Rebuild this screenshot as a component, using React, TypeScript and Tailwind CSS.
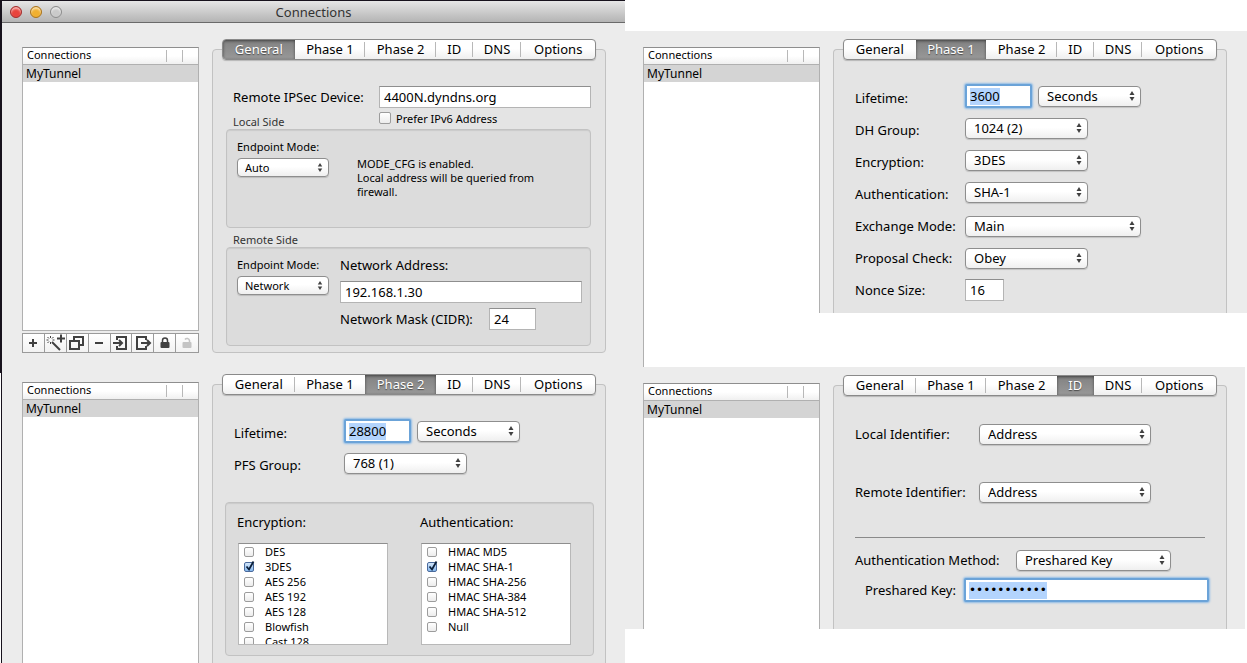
import React, { useId, useState } from "react";
import clsx from "clsx";

const TABS = ["General", "Phase 1", "Phase 2", "ID", "DNS", "Options"];

const ENCRYPTION = ["DES", "3DES", "AES 256", "AES 192", "AES 128", "Blowfish", "Cast 128"];
const AUTHENTICATION = ["HMAC MD5", "HMAC SHA-1", "HMAC SHA-256", "HMAC SHA-384", "HMAC SHA-512", "Null"];

const TOOLS: { label: string; disabled?: boolean; icon: React.ReactNode }[] = [
  { label: "Add", icon: <path d="M7 10h8M11 6v8" strokeWidth="2" /> },
  {
    label: "Assistant",
    icon: (
      <>
        <path d="M8 9l8 8" strokeWidth="2" />
        <path d="M13 5.500h8M17 1.500v8" strokeWidth="2" />
        <path
          d="M6.500 3v2M6.500 9v2M2.500 7h2M8.500 7h2M3.500 4l1.500 1.500M9.500 4L8 5.500M3.500 10L5 8.500"
          strokeWidth="1"
        />
      </>
    ),
  },
  { label: "Duplicate", icon: <path d="M4 8h9v8H4zM8 8V4h9v8h-4" strokeWidth="2" /> },
  { label: "Remove", icon: <path d="M7 10h8" strokeWidth="2" /> },
  { label: "Import", icon: <path d="M7 7V4h9v12H7v-3M3 10h9M9 7l3 3-3 3" strokeWidth="2" /> },
  { label: "Export", icon: <path d="M14 7V4H5v12h9v-3M9 10h9M15 7l3 3-3 3" strokeWidth="2" /> },
  {
    label: "Lock",
    icon: (
      <>
        <rect x="6.500" y="9" width="9" height="6" rx="1" fill="currentColor" stroke="none" />
        <path d="M8.500 9V7.500a2.500 2.500 0 0 1 5 0V9" strokeWidth="1.500" />
      </>
    ),
  },
  {
    label: "Unlock",
    disabled: true,
    icon: (
      <>
        <rect x="6.500" y="9" width="9" height="6" rx="1" fill="currentColor" stroke="none" />
        <path d="M9 6.500a2.500 2.500 0 0 1 4.500 1V9" strokeWidth="1.500" />
      </>
    ),
  },
];

const TrafficLight: React.FC<{ label: string; className: string }> = ({ label, className }) => (
  <button
    aria-label={label}
    className={clsx("h-3 w-3 rounded-full border shadow-[inset_0_2px_2px_rgba(255,255,255,0.6)]", className)}
  />
);

const ConnectionTable: React.FC = () => (
  <table className="w-full table-fixed border-collapse text-left">
    <thead>
      <tr className="h-4 border-b border-[#b0b0b0] bg-linear-to-b from-white from-50% to-[#f0f0f0]">
        <th className="p-0 pb-0.5 pl-1 text-[11px] leading-[14px] font-normal">Connections</th>
        <th className="w-4 p-0">
          <span className="block h-3 border-l border-[#b8b8b8]" />
        </th>
        <th className="w-4 p-0">
          <span className="block h-3 border-l border-[#b8b8b8]" />
        </th>
      </tr>
    </thead>
    <tbody>
      <tr className="h-[17px] bg-[#d4d4d4]">
        <td colSpan={3} className="p-0 pl-[3px] text-[12px] leading-[17px]">
          MyTunnel
        </td>
      </tr>
    </tbody>
  </table>
);

const Toolbar: React.FC = () => (
  <div className="mt-0.5 grid h-5 grid-cols-8 border border-[#9a9a9a] bg-linear-to-b from-white to-[#f2f2f2]">
    {TOOLS.map((tool) => (
      <button
        key={tool.label}
        aria-label={tool.label}
        disabled={tool.disabled}
        className="flex min-w-0 items-center justify-center border-r border-[#9a9a9a] text-[#404040] last:border-r-0 disabled:text-[#c4c4c4]"
      >
        <svg width="22" height="18" viewBox="0 1 22 18" fill="none" stroke="currentColor" className="shrink-0">
          {tool.icon}
        </svg>
      </button>
    ))}
  </div>
);

/* Tab strip sitting on top of the pane's border */
const TabPane: React.FC<{ active: string; cut?: boolean; className?: string; children: React.ReactNode }> = ({
  active,
  cut,
  className,
  children,
}) => (
  <div className={clsx("flex min-w-0 flex-1 flex-col", className)}>
    <div
      role="tablist"
      className="z-10 mx-2.5 grid h-[21px] shrink-0 grid-cols-[72fr_71fr_71fr_37fr_49fr_74fr] overflow-hidden rounded-[4px] border border-[#8a8a8a] bg-linear-to-b from-white from-45% to-[#efefef] shadow-[0_1px_1px_rgba(0,0,0,0.2)]"
    >
      {TABS.map((tab, i) => {
        const selected = tab === active;
        const plain = !selected && i < TABS.length - 1 && TABS[i + 1] !== active;
        return (
          <button
            key={tab}
            role="tab"
            aria-selected={selected}
            className={clsx(
              "flex items-center justify-center text-[13px] leading-[19px] whitespace-nowrap",
              selected &&
                "bg-linear-to-b from-[#828282] to-[#989898] text-white shadow-[inset_0_1px_3px_rgba(0,0,0,0.5)] [text-shadow:0_1px_1px_rgba(0,0,0,0.5)]",
              plain &&
                "bg-[linear-gradient(#b8b8b8,#b8b8b8)] bg-[length:1px_15px] bg-right bg-no-repeat"
            )}
          >
            {tab}
          </button>
        );
      })}
    </div>
    <div
      className={clsx(
        "-mt-[11px] flex-1 border border-[#c2c2c2] bg-[#e4e4e4]",
        cut ? "rounded-t-[4px] border-b-0" : "rounded-[4px]"
      )}
    >
      {children}
    </div>
  </div>
);

const GroupBox: React.FC<{ label: string; className?: string; children: React.ReactNode }> = ({
  label,
  className,
  children,
}) => (
  <div
    role="group"
    aria-label={label}
    className={clsx(
      "flex rounded-[4px] border border-[#c2c2c2] bg-[#dcdcdc] shadow-[inset_0_1px_1px_rgba(0,0,0,0.08)]",
      className
    )}
  >
    {children}
  </div>
);

const Select: React.FC<{ id: string; value: string; small?: boolean; className?: string }> = ({
  id,
  value,
  small,
  className,
}) => (
  <div className={clsx("relative shrink-0", className)}>
    <select
      id={id}
      aria-label={id.startsWith("unit") ? "Lifetime unit" : undefined}
      className={clsx(
        "block w-full appearance-none rounded-[4px] border border-[#8e8e8e] bg-linear-to-b from-white from-45% to-[#efefef] shadow-[0_1px_1px_rgba(0,0,0,0.15)]",
        small ? "h-[19px] pl-[7px] text-[11px] leading-[17px]" : "h-[21px] pl-2 text-[13px] leading-[19px]"
      )}
    >
      <option>{value}</option>
    </select>
    <svg
      viewBox="0 0 6 10"
      className={clsx("pointer-events-none absolute top-[5px] right-1.5 w-1.5", small ? "h-[9px]" : "h-2.5")}
      fill="#404040"
    >
      <path d="M3 0l2.500 4h-5zM3 10L.5 6h5z" />
    </svg>
  </div>
);

const TextField: React.FC<{ id: string; value: string; className?: string }> = ({ id, value, className }) => (
  <input
    id={id}
    defaultValue={value}
    className={clsx(
      "h-[22px] min-w-0 border border-[#b4b4b4] border-t-[#8e8e8e] bg-white px-1 text-[13px] leading-5 outline-none",
      className
    )}
  />
);

/* Focused field, its whole value selected */
const FocusedField: React.FC<{ id: string; value: string; type?: string; className?: string }> = ({
  id,
  value,
  type = "text",
  className,
}) => (
  <div
    className={clsx(
      "flex h-6 items-center rounded-[2px] border-2 border-[#6ba3d8] bg-white pl-[3px] shadow-[0_0_2px_1px_#8fbbe6]",
      className
    )}
  >
    <input
      id={id}
      type={type}
      defaultValue={value}
      className={clsx(
        "field-sizing-content h-[17px] bg-[#b3d4fd] outline-none",
        type === "password" ? "font-['DejaVu_Sans',sans-serif] text-[12px]" : "text-[13px] leading-[17px]"
      )}
    />
  </div>
);

const CheckBox: React.FC<{ label: string; checked?: boolean; size: string; className?: string }> = ({
  label,
  checked = false,
  size,
  className,
}) => {
  const [on, setOn] = useState(checked);
  return (
    <label className={clsx("flex items-center text-[11px] leading-[15px]", className)}>
      <span className={clsx("relative shrink-0", size)}>
        <input
          type="checkbox"
          checked={on}
          onChange={() => setOn(!on)}
          className="block h-full w-full appearance-none rounded-[2px] border border-[#9c9c9c] bg-linear-to-b from-white to-[#ececec] checked:border-[#4a6a9c] checked:from-[#d3e6fa] checked:to-[#86b8ee]"
        />
        {on && (
          <svg
            viewBox="0 0 12 12"
            className="pointer-events-none absolute bottom-0 left-0 h-3 w-3"
            fill="none"
            stroke="#0b1f3a"
          >
            <path d="M2.500 6.500L5 9.500L9.500 1.500" strokeWidth="1.800" />
          </svg>
        )}
      </span>
      {label}
    </label>
  );
};

const CheckList: React.FC<{ title: string; items: string[]; checked: string }> = ({ title, items, checked }) => (
  <div>
    <h3 className="text-[13px] leading-[14px]">{title}</h3>
    <div className="mt-3.5 ml-px h-[102px] w-[150px] overflow-y-auto border border-[#b8b8b8] border-t-[#8e8e8e] bg-white pl-[5px] [scrollbar-width:none]">
      {items.map((item) => (
        <CheckBox key={item} label={item} checked={item === checked} size="w-2.5 h-2.5" className="h-[15px] gap-[11px]" />
      ))}
    </div>
  </div>
);

const Row: React.FC<{
  id: string;
  label: string;
  labelClass?: string;
  className?: string;
  children: React.ReactNode;
}> = ({ id, label, labelClass = "w-[110px]", className = "h-8", children }) => (
  <div className={clsx("flex items-center", className)}>
    <label htmlFor={id} className={clsx("shrink-0 text-[13px] leading-[18px] whitespace-nowrap", labelClass)}>
      {label}
    </label>
    {children}
  </div>
);

const GeneralPane: React.FC = () => {
  const id = useId();
  return (
    <div className="pt-9 pr-3.5 pb-1.5 pl-[13px]">
      <div className="grid grid-cols-[146px_1fr] pl-[7px]">
        <label htmlFor={id + "device"} className="self-center text-[13px] leading-[18px] whitespace-nowrap">
          Remote IPSec Device:
        </label>
        <TextField id={id + "device"} value="4400N.dyndns.org" />
        <h3 className="h-[21px] pt-[7px] text-[11px] leading-[14px] text-[#333]">Local Side</h3>
        <CheckBox label="Prefer IPv6 Address" size="w-3 h-3" className="h-5 gap-[5px]" />
      </div>
      <GroupBox label="Local Side" className="min-h-[99px] gap-7 pt-2.5 pl-2.5">
        <div className="w-[92px] shrink-0">
          <label htmlFor={id + "local"} className="mb-1 block text-[11px] leading-[14px] whitespace-nowrap">
            Endpoint Mode:
          </label>
          <Select id={id + "local"} value="Auto" small />
        </div>
        <p className="w-[200px] pt-[17px] text-[11px] leading-[14px]">
          MODE_CFG is enabled.
          <br />
          Local address will be queried from firewall.
        </p>
      </GroupBox>
      <h3 className="h-[19px] pt-[5px] pl-[7px] text-[11px] leading-[14px] text-[#333]">Remote Side</h3>
      <GroupBox label="Remote Side" className="min-h-[99px] gap-[11px] pt-2.5 pr-2 pb-[15px] pl-2.5">
        <div className="w-[92px] shrink-0">
          <label htmlFor={id + "remote"} className="mb-1 block text-[11px] leading-[14px] whitespace-nowrap">
            Endpoint Mode:
          </label>
          <Select id={id + "remote"} value="Network" small />
        </div>
        <div className="flex-1">
          <label htmlFor={id + "net"} className="block text-[13px] leading-[14px]">
            Network Address:
          </label>
          <TextField id={id + "net"} value="192.168.1.30" className="mt-[9px] mb-[5px] block w-full" />
          <Row id={id + "mask"} label="Network Mask (CIDR):" labelClass="w-[149px]" className="h-[22px]">
            <TextField id={id + "mask"} value="24" className="w-[47px]" />
          </Row>
        </div>
      </GroupBox>
    </div>
  );
};

const Phase1Pane: React.FC = () => (
  <div className="pt-[30px] pl-[21px]">
    <Row id="p1-lifetime" label="Lifetime:" labelClass="w-[110px] pt-[3px]">
      <FocusedField id="p1-lifetime" value="3600" className="mr-1.5 w-[67px]" />
      <Select id="unit-p1" value="Seconds" className="w-[103px]" />
    </Row>
    <Row id="p1-dh" label="DH Group:" labelClass="w-[110px] pt-[3px]">
      <Select id="p1-dh" value="1024 (2)" className="w-[123px]" />
    </Row>
    <Row id="p1-enc" label="Encryption:" labelClass="w-[110px] pt-[3px]">
      <Select id="p1-enc" value="3DES" className="w-[123px]" />
    </Row>
    <Row id="p1-auth" label="Authentication:" labelClass="w-[110px] pt-[3px]">
      <Select id="p1-auth" value="SHA-1" className="w-[123px]" />
    </Row>
    <div className="pt-0.5">
      <Row id="p1-mode" label="Exchange Mode:">
        <Select id="p1-mode" value="Main" className="w-[176px]" />
      </Row>
      <Row id="p1-check" label="Proposal Check:">
        <Select id="p1-check" value="Obey" className="w-[123px]" />
      </Row>
      <Row id="p1-nonce" label="Nonce Size:">
        <TextField id="p1-nonce" value="16" className="w-[39px]" />
      </Row>
    </div>
  </div>
);

const Phase2Pane: React.FC = () => (
  <div className="pt-[30px] pr-[11px] pl-3">
    <div className="pl-[9px]">
      <Row id="p2-lifetime" label="Lifetime:" labelClass="w-[110px] pt-[3px]">
        <FocusedField id="p2-lifetime" value="28800" className="mr-1.5 w-[67px]" />
        <Select id="unit-p2" value="Seconds" className="w-[103px]" />
      </Row>
      <Row id="p2-pfs" label="PFS Group:" labelClass="w-[110px] pt-[3px]">
        <Select id="p2-pfs" value="768 (1)" className="w-[123px]" />
      </Row>
    </div>
    <GroupBox label="Proposals" className="mt-[23px] min-h-[154px] gap-8 pt-3 pl-[11px]">
      <CheckList title="Encryption:" items={ENCRYPTION} checked="3DES" />
      <CheckList title="Authentication:" items={AUTHENTICATION} checked="HMAC SHA-1" />
    </GroupBox>
  </div>
);

const IdPane: React.FC = () => (
  <div className="pt-8 pr-[21px] pl-[21px]">
    <Row id="local-id" label="Local Identifier:" labelClass="w-[124px]">
      <Select id="local-id" value="Address" className="w-[172px]" />
    </Row>
    <Row id="remote-id" label="Remote Identifier:" labelClass="w-[124px]" className="mt-[26px] h-8">
      <Select id="remote-id" value="Address" className="w-[172px]" />
    </Row>
    <hr className="mt-[29px] border-[#8a8a8a]" />
    <Row id="auth-method" label="Authentication Method:" labelClass="w-[161px]" className="mt-1.5 h-8">
      <Select id="auth-method" value="Preshared Key" className="w-[155px]" />
    </Row>
    <Row id="psk" label="Preshared Key:" labelClass="w-[99px]" className="-mr-1 h-7 pl-[10px]">
      <FocusedField id="psk" value="presharedke" type="password" className="flex-1" />
    </Row>
  </div>
);

const Sidebar: React.FC<{ toolbar?: boolean; className?: string }> = ({ toolbar, className }) => (
  <div className={clsx("mt-2 flex w-[177px] shrink-0 flex-col", className)}>
    <div
      className={clsx("flex-1 border border-[#b0b0b0] border-t-[#8e8e8e] bg-white", !toolbar && "border-b-0")}
    >
      <ConnectionTable />
    </div>
    {toolbar && <Toolbar />}
  </div>
);

const App: React.FC = () => {
  return (
    <div className="grid min-h-screen grid-cols-[625fr_622fr] bg-white font-['Noto_Sans',sans-serif] text-black">
      <div className="flex flex-col">
        {/* General */}
        <section className="border-t border-l-2 border-[#17121c] bg-[#ececec]">
          <header className="grid h-[22px] grid-cols-[1fr_auto_1fr] items-center rounded-t-[4px] border-b border-[#6a6a6a] bg-linear-to-b from-[#e6e6e6] to-[#b4b4b4] px-2">
            <div className="flex gap-2">
              <TrafficLight label="Close" className="border-[#a03030] bg-[#e8443c]" />
              <TrafficLight label="Minimize" className="border-[#a87420] bg-[#f0b030]" />
              <TrafficLight label="Zoom" className="border-[#8c8c8c] bg-[#cacaca]" />
            </div>
            <h1 className="text-[13px] leading-[18px] text-[#333]">Connections</h1>
          </header>
          <div className="flex pt-4 pr-[19px] pb-5 pl-5">
            <Sidebar toolbar />
            <TabPane active="General" className="ml-[13px]">
              <GeneralPane />
            </TabPane>
          </div>
        </section>

        {/* Phase 2 */}
        <section className="ml-px flex flex-1 border-l border-[#17121c] bg-[#ececec] pt-px pr-[19px] pl-5">
          <Sidebar />
          <TabPane active="Phase 2" cut className="ml-[13px]">
            <Phase2Pane />
          </TabPane>
        </section>
      </div>

      <div className="flex flex-col pt-[31px]">
        {/* Phase 1, the list runs on below the pane */}
        <section className="flex">
          <div className="w-[18px] shrink-0 bg-[#ececec]" />
          <div className="flex-1 pb-[54px] shadow-[inset_1px_0_0_#b0b0b0]">
            <div className="flex bg-[#ececec] pt-2 pr-5">
              <Sidebar />
              <TabPane active="Phase 1" cut className="ml-[13px]">
                <div className="pb-[7px]">
                  <Phase1Pane />
                </div>
              </TabPane>
            </div>
          </div>
        </section>

        {/* ID */}
        <section className="mr-0.5 flex bg-[#ececec] pt-2 pr-[18px] pl-[18px]">
          <Sidebar />
          <TabPane active="ID" cut className="ml-[13px]">
            <div className="pb-[25px]">
              <IdPane />
            </div>
          </TabPane>
        </section>
      </div>
    </div>
  );
};

export default App;
